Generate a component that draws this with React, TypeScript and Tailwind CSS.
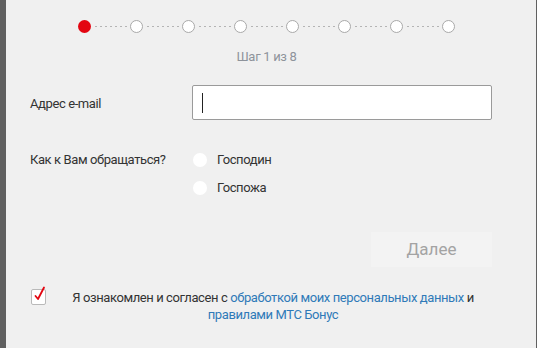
import React from 'react';

const steps = [1, 2, 3, 4, 5, 6, 7, 8];

const Connector: React.FC = () => (
  <div className="flex w-[39px] items-center justify-center gap-[3px]">
    {[0, 1, 2, 3, 4, 5, 6].map((i) => (
      <span key={i} className="block h-px w-[2px] bg-[#b4b4b4]" />
    ))}
  </div>
);

const Radio: React.FC<{ label: string }> = ({ label }) => (
  <label className="flex h-[28px] items-center gap-[10px]">
    <span className="block h-[14px] w-[14px] rounded-full bg-white" />
    <span className="text-[13px] tracking-[-0.4px] text-[#333]">{label}</span>
  </label>
);

const App: React.FC = () => {
  return (
    <div
      className="flex h-[348px] w-[537px] overflow-hidden bg-[#606060]"
      style={{ fontFamily: 'Roboto, "Noto Sans", sans-serif' }}
    >
      <div className="w-[6px] shrink-0" />
      <div className="flex w-[530px] flex-col bg-[#f0f0f0]">
        {/* stepper */}
        <div className="ml-[72px] mt-[20px] flex w-[377px] flex-col items-center">
          <div className="flex h-[13px] items-center">
            {steps.map((s, i) => (
              <React.Fragment key={s}>
                {i > 0 && <Connector />}
                {i === 0 ? (
                  <span className="block h-[13px] w-[13px] rounded-full bg-[#e30611]" />
                ) : (
                  <span className="block h-[13px] w-[13px] rounded-full border border-[#a9a9a9] bg-white" />
                )}
              </React.Fragment>
            ))}
          </div>
          <div className="mt-[16px] text-[13px] leading-[16px] tracking-[-0.3px] text-[#8e939b]">Шаг 1 из 8</div>
        </div>

        {/* email */}
        <div className="mt-[20px] flex items-center pl-[24px]">
          <div className="w-[162px] pt-[3px] text-[13px] tracking-[-0.4px] text-[#333]">Адрес e-mail</div>
          <div className="flex h-[35px] w-[300px] items-center rounded-[2px] border border-[#9a9a9a] bg-white pl-[9px]">
            <span className="block h-[20px] w-px bg-[#222]" />
          </div>
        </div>

        {/* gender */}
        <div className="mt-[26px] flex pl-[24px]">
          <div className="flex h-[28px] w-[163px] items-center text-[13px] tracking-[-0.4px] text-[#333]">
            Как к Вам обращаться?
          </div>
          <div className="flex flex-col">
            <Radio label="Господин" />
            <Radio label="Госпожа" />
          </div>
        </div>

        {/* button */}
        <div className="mt-[30px] flex justify-end pr-[44px]">
          <button className="h-[35px] w-[121px] bg-[#f3f3f3] text-[17px] text-[#a3a3a3]">Далее</button>
        </div>

        {/* agreement */}
        <div className="mt-[22px] flex items-start pl-[25px]">
          <div className="relative h-[16px] w-[15px] shrink-0 rounded-[2px] border border-[#b9b9b9] bg-white">
            <svg
              className="absolute left-[1px] top-[-4px]"
              width="13"
              height="16"
              viewBox="0 0 13 16"
              fill="none"
            >
              <path d="M2.5 10 L5 13 L11 1.5" stroke="#e30611" strokeWidth="1.8" strokeLinecap="round" strokeLinejoin="round" />
            </svg>
          </div>
          <p className="ml-[10px] w-[434px] text-center text-[13px] leading-[17px] tracking-[-0.4px] text-[#333]">
            Я ознакомлен и согласен с{' '}
            <a className="text-[#2f7ab8]">обработкой моих персональных данных</a> и{' '}
            <a className="text-[#2f7ab8]">правилами МТС Бонус</a>
          </p>
        </div>
      </div>
    </div>
  );
};

export default App;
